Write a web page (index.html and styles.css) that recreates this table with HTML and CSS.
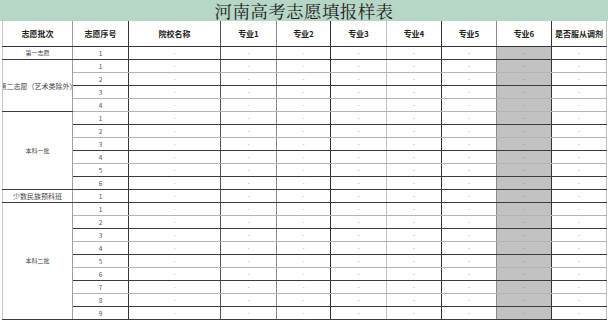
FILE: index.html
```html
<!DOCTYPE html>
<html lang="zh">
<head>
<meta charset="utf-8">
<link rel="stylesheet" href="styles.css">
</head>
<body>
<div class="sheet">
  <div class="title"><span class="title-text">河南高考志愿填报样表</span></div>
  <table class="grid">
    <colgroup>
      <col class="c-batch"><col class="c-seq"><col class="c-school"><col class="c-m"><col class="c-m2"><col class="c-m"><col class="c-m5"><col class="c-m5"><col class="c-m5"><col class="c-m5">
    </colgroup>
    <thead>
      <tr class="head">
        <th>志愿批次</th><th>志愿序号</th><th>院校名称</th><th>专业1</th><th>专业2</th><th>专业3</th><th>专业4</th><th>专业5</th><th>专业6</th><th>是否服从调剂</th>
      </tr>
    </thead>
    <tbody>
      <tr class="d"><td class="batch">第一志愿</td><td>1</td><td>-</td><td>-</td><td>-</td><td>-</td><td>-</td><td>-</td><td>-</td><td>-</td></tr>
      <tr class="l"><td class="batch wide" rowspan="4"><span class="over">第二志愿（艺术类除外）</span></td><td>1</td><td>-</td><td>-</td><td>-</td><td>-</td><td>-</td><td>-</td><td>-</td><td>-</td></tr>
      <tr class="d"><td>2</td><td>-</td><td>-</td><td>-</td><td>-</td><td>-</td><td>-</td><td>-</td><td>-</td></tr>
      <tr class="l"><td>3</td><td>-</td><td>-</td><td>-</td><td>-</td><td>-</td><td>-</td><td>-</td><td>-</td></tr>
      <tr class="l"><td>4</td><td>-</td><td>-</td><td>-</td><td>-</td><td>-</td><td>-</td><td>-</td><td>-</td></tr>
      <tr class="d"><td class="batch" rowspan="6">本科一批</td><td>1</td><td>-</td><td>-</td><td>-</td><td>-</td><td>-</td><td>-</td><td>-</td><td>-</td></tr>
      <tr class="l"><td>2</td><td>-</td><td>-</td><td>-</td><td>-</td><td>-</td><td>-</td><td>-</td><td>-</td></tr>
      <tr class="d"><td>3</td><td>-</td><td>-</td><td>-</td><td>-</td><td>-</td><td>-</td><td>-</td><td>-</td></tr>
      <tr class="l"><td>4</td><td>-</td><td>-</td><td>-</td><td>-</td><td>-</td><td>-</td><td>-</td><td>-</td></tr>
      <tr class="d"><td>5</td><td>-</td><td>-</td><td>-</td><td>-</td><td>-</td><td>-</td><td>-</td><td>-</td></tr>
      <tr class="d"><td>6</td><td>-</td><td>-</td><td>-</td><td>-</td><td>-</td><td>-</td><td>-</td><td>-</td></tr>
      <tr class="d"><td class="batch wide">少数民族预科班</td><td>1</td><td>-</td><td>-</td><td>-</td><td>-</td><td>-</td><td>-</td><td>-</td><td>-</td></tr>
      <tr class="l"><td class="batch" rowspan="9">本科二批</td><td>1</td><td>-</td><td>-</td><td>-</td><td>-</td><td>-</td><td>-</td><td>-</td><td>-</td></tr>
      <tr class="d"><td>2</td><td>-</td><td>-</td><td>-</td><td>-</td><td>-</td><td>-</td><td>-</td><td>-</td></tr>
      <tr class="l"><td>3</td><td>-</td><td>-</td><td>-</td><td>-</td><td>-</td><td>-</td><td>-</td><td>-</td></tr>
      <tr class="d"><td>4</td><td>-</td><td>-</td><td>-</td><td>-</td><td>-</td><td>-</td><td>-</td><td>-</td></tr>
      <tr class="l"><td>5</td><td>-</td><td>-</td><td>-</td><td>-</td><td>-</td><td>-</td><td>-</td><td>-</td></tr>
      <tr class="d"><td>6</td><td>-</td><td>-</td><td>-</td><td>-</td><td>-</td><td>-</td><td>-</td><td>-</td></tr>
      <tr class="l"><td>7</td><td>-</td><td>-</td><td>-</td><td>-</td><td>-</td><td>-</td><td>-</td><td>-</td></tr>
      <tr class="d"><td>8</td><td>-</td><td>-</td><td>-</td><td>-</td><td>-</td><td>-</td><td>-</td><td>-</td></tr>
      <tr class="d"><td>9</td><td>-</td><td>-</td><td>-</td><td>-</td><td>-</td><td>-</td><td>-</td><td>-</td></tr>
    </tbody>
  </table>
</div>
</body>
</html>
```

FILE: styles.css
```css
html, body {
  margin: 0;
  padding: 0;
  background: #ffffff;
}

.sheet {
  width: 608px;
  height: 322px;
  overflow: hidden;
  font-family: "Noto Sans CJK SC", "Noto Sans", sans-serif;
  color: #333;
}

.title {
  height: 21px;
  background: #b6d6c6;
  display: flex;
  justify-content: center;
  align-items: flex-end;
}

.title-text {
  font-family: "Noto Serif CJK SC", "Noto Sans CJK SC", serif;
  font-size: 17.5px;
  line-height: 18px;
  color: #1c1c1c;
  letter-spacing: 0.4px;
  padding-bottom: 1px;
}

.grid {
  margin-left: 2px;
  border-collapse: collapse;
  table-layout: fixed;
  width: 604px;
}

.c-batch { width: 70px; }
.c-seq { width: 56px; }
.c-school { width: 92px; }
.c-m { width: 56px; }
.c-m2 { width: 54px; }
.c-m5 { width: 55px; }

.grid th,
.grid td {
  padding: 0;
  text-align: center;
  vertical-align: middle;
  white-space: nowrap;
  border-style: solid;
  border-width: 0 1px 1px 0;
  border-color: #444;
  overflow: visible;
}

.head th {
  height: 25px;
  font-size: 8px;
  font-weight: bold;
  color: #222;
  border-bottom-color: #333;
}

.grid td {
  height: 12px;
  font-size: 6px;
  line-height: 12px;
  color: #888;
}

tr.l td { border-bottom-color: #b4b4b4; }
tr.d td { border-bottom-color: #3c3c3c; }

.grid tr > :nth-child(1).batch,
.grid th:nth-last-child(10) { border-right-color: #a0a0a0; border-left: 1px solid #c8c8c8; }
.grid tr > :nth-last-child(9) { border-right-color: #333; color: #555; font-size: 6.5px; }
.grid tr > :nth-last-child(8) { border-right-color: #555; color: #8fb1e0; }
.grid tr > :nth-last-child(7) { border-right-color: #8a8a8a; }
.grid tr > :nth-last-child(6) { border-right-color: #333; }
.grid tr > :nth-last-child(5) { border-right-color: #c0c0c0; }
.grid tr > :nth-last-child(4) { border-right-color: #333; }
.grid tr > :nth-last-child(3) { border-right-color: #8a8a8a; }
.grid tr > :nth-last-child(2) { border-right-color: #333; }
.grid tr > :nth-last-child(1) { border-right-color: #c0c0c0; }

.grid th:nth-last-child(n) { color: #222; font-size: 8px; }

.grid tbody td:nth-last-child(2) {
  background: #c2c2c2;
  color: #777;
}

.grid td.batch {
  color: #444;
  font-size: 6px;
  border-bottom-color: #3c3c3c;
}

.grid td.wide {
  font-size: 7px;
}

.over {
  display: flex;
  justify-content: center;
  width: 70px;
  overflow: hidden;
}
```
